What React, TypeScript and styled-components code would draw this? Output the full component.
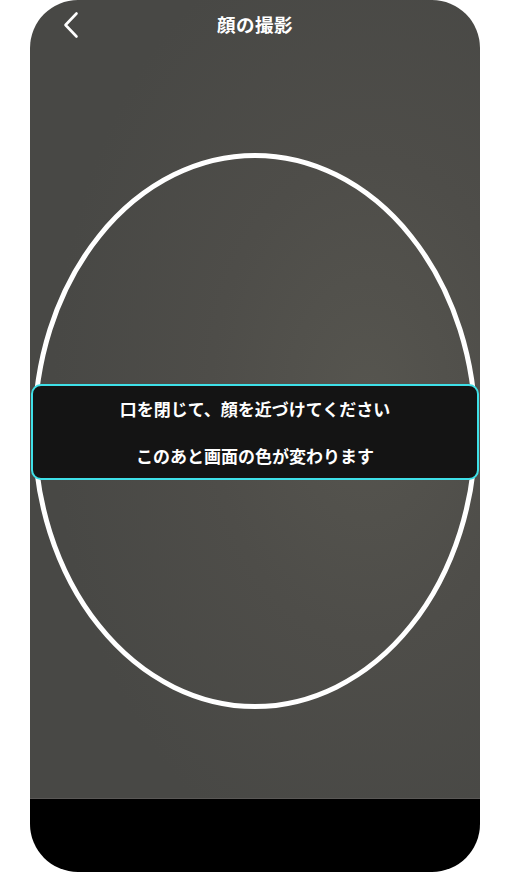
import React from "react";
import styled, { createGlobalStyle } from "styled-components";

const GlobalStyle = createGlobalStyle`
  html, body { margin: 0; padding: 0; background: #ffffff; }
  body { font-family: "Noto Sans CJK JP", "Noto Sans", sans-serif; }
`;

const Page = styled.div`
  width: 510px;
  height: 872px;
  display: flex;
  justify-content: center;
`;

const Phone = styled.div`
  width: 450px;
  height: 872px;
  border-radius: 48px;
  overflow: hidden;
  display: flex;
  flex-direction: column;
`;

const Camera = styled.div`
  position: relative;
  height: 799px;
  flex: none;
  background: radial-gradient(ellipse 70% 60% at 75% 50%, #56554f 0%, #4e4d49 50%, #484845 100%);
  border-bottom: 1px solid #5a5856;
  box-sizing: border-box;
`;

const Header = styled.div`
  position: relative;
  height: 50px;
  display: flex;
  align-items: center;
  justify-content: center;
  z-index: 2;
`;

const BackButton = styled.button`
  position: absolute;
  left: 26px;
  top: 10px;
  width: 30px;
  height: 30px;
  padding: 0;
  border: none;
  background: transparent;
  display: flex;
  align-items: center;
  justify-content: center;
`;

const Title = styled.h1`
  margin: 0 0 2px;
  font-size: 18.5px;
  font-weight: 700;
  color: #ffffff;
  letter-spacing: 0.5px;
`;

const Guide = styled.svg`
  position: absolute;
  left: 0;
  top: 0;
  width: 450px;
  height: 799px;
`;

const Prompt = styled.div`
  position: absolute;
  left: 1px;
  right: 1px;
  top: 384px;
  height: 96px;
  box-sizing: border-box;
  border: 2.5px solid #3fe0e8;
  border-radius: 10px;
  background: #141414;
  display: flex;
  flex-direction: column;
  align-items: center;
  justify-content: center;
  gap: 21px;
`;

const PromptLine = styled.p`
  margin: 0;
  font-size: 17px;
  line-height: 26px;
  font-weight: 700;
  color: #ffffff;
`;

const Bottom = styled.div`
  flex: 1;
  background: #000000;
`;

export default function App() {
  return (
    <>
      <GlobalStyle />
      <Page>
        <Phone>
          <Camera>
            <Guide viewBox="0 0 450 799">
              <ellipse cx="225" cy="431" rx="220.5" ry="275.5" fill="none" stroke="#ffffff" strokeWidth="5" />
            </Guide>
            <Header>
              <BackButton aria-label="戻る">
                <svg width="16" height="28" viewBox="0 0 16 28">
                  <polyline points="13.5,2.5 2.5,14 13.5,25.5" fill="none" stroke="#ffffff" strokeWidth="2.6" strokeLinecap="round" strokeLinejoin="round" />
                </svg>
              </BackButton>
              <Title>顔の撮影</Title>
            </Header>
            <Prompt>
              <PromptLine>口を閉じて、顔を近づけてください</PromptLine>
              <PromptLine>このあと画面の色が変わります</PromptLine>
            </Prompt>
          </Camera>
          <Bottom />
        </Phone>
      </Page>
    </>
  );
}
